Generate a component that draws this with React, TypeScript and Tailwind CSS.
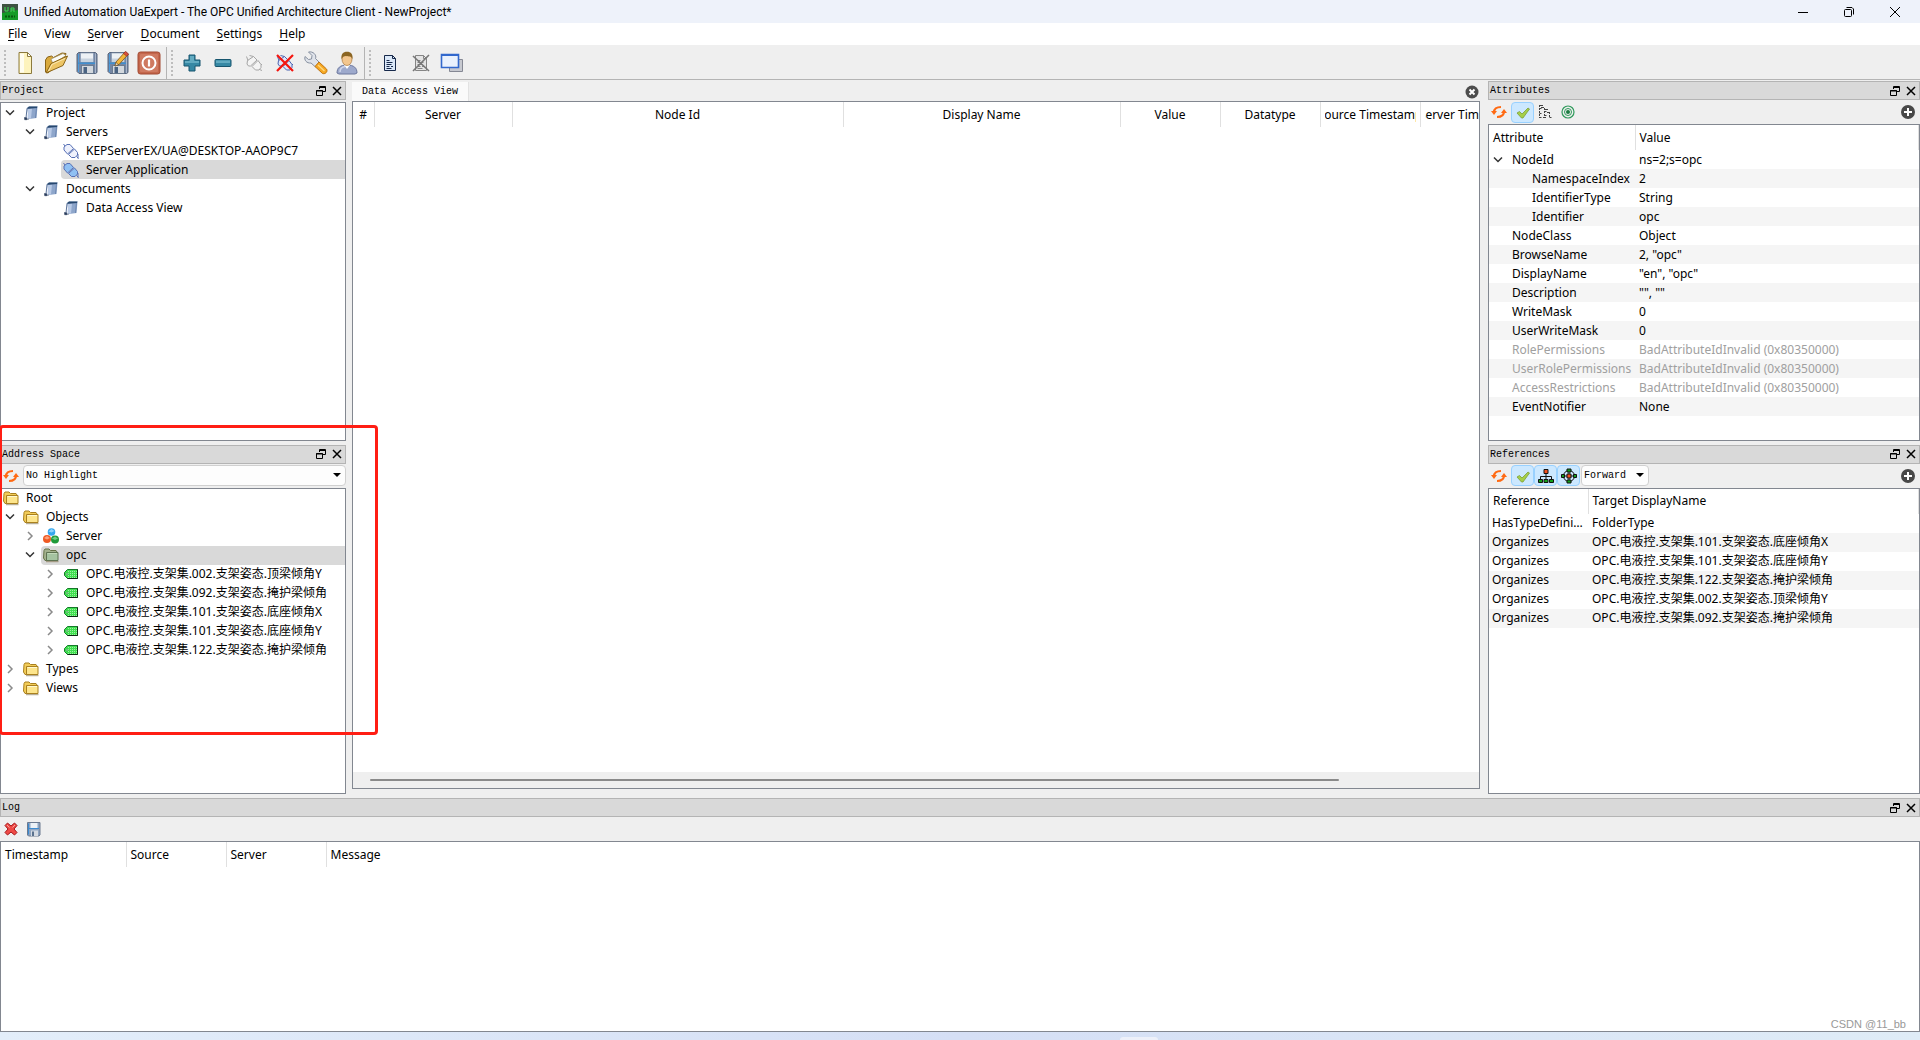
import React, { ReactNode } from "react";

type IconProps = { children: ReactNode; size?: "sm" | "md" };

function Icon({ children, size = "sm" }: IconProps) {
  return (
    <svg
      viewBox={size === "sm" ? "0 0 16 16" : "0 0 24 24"}
      className={size === "sm" ? "size-4 shrink-0" : "size-6 shrink-0"}
      fill="none"
      aria-hidden="true"
    >
      {children}
    </svg>
  );
}

/* ---------- toolbar icons ---------- */

const NewFileIcon = () => (
  <Icon size="md">
    <path d="M6 1.500h8.500l4 4V22.500H6z" fill="#fdf3bd" stroke="#8c7a3d" />
    <path d="M7 2.500h4v19H7z" fill="#fffdf0" />
    <path d="M14.500 1.500v4h4z" fill="#fff" stroke="#8c7a3d" />
  </Icon>
);

const OpenIcon = () => (
  <Icon size="md">
    <path d="M1.500 21V9l2-3 4-1 2 1.500L18 2l4 .5-1 4L4 22z" fill="#d9a93c" stroke="#8a6417" />
    <path d="M7 8 19 2.500l3 2L9 13z" fill="#fbfbf6" stroke="#9b8a5c" strokeWidth=".7" />
    <path d="m2 22 5-9.500L23.500 5 19 14.500z" fill="#edc566" stroke="#8a6417" />
    <path d="m4.500 20 3.500-6.500 13-6" stroke="#fae7b0" />
  </Icon>
);

const Floppy = () => (
  <>
    <path d="M3.500 1.500h17l1.500 1.500v18.500l-1.500 1H4l-2-2V3z" fill="#7486a3" stroke="#56647c" />
    <path d="M20.500 2.500v19.500" stroke="#a9b6ca" />
    <path d="M3.500 3v18" stroke="#4f9ad8" />
    <path d="M5.500 2h13v9h-13z" fill="#edf1f5" stroke="#8598b2" strokeWidth=".7" />
    <path d="M6 7.500h12v3H6z" fill="#c8d3df" />
    <path d="M3 11.500h17v1.500H3z" fill="#3f8fd0" />
    <path d="M6.500 14.500h12v8h-12z" fill="#d3d8de" stroke="#53657d" strokeWidth=".7" />
    <path d="M8.500 16h3.500v6H8.500z" fill="#4a6382" />
  </>
);

const SaveIcon = () => (
  <Icon size="md">
    <Floppy />
  </Icon>
);

const SaveAsIcon = () => (
  <Icon size="md">
    <Floppy />
    <path d="m9 15 1-4L19 1l3 2.500-9 10z" fill="#f3b53a" stroke="#7d5312" strokeWidth=".8" />
    <path d="m17.500 2.500 2-2.200 3.200 2.700-2 2.200z" fill="#d8503e" stroke="#83281c" strokeWidth=".6" />
    <path d="m9 15 1-3.500 2.500 2z" fill="#f7e3c0" stroke="#4d3c20" strokeWidth=".5" />
  </Icon>
);

const PowerIcon = () => (
  <Icon size="md">
    <rect x="1" y="1" width="22" height="22" rx="2.500" fill="#c4674c" stroke="#a34a33" />
    <rect x="3" y="3" width="18" height="18" rx="1" fill="#cf7a61" />
    <circle cx="12" cy="12" r="6.500" stroke="#fff" strokeWidth="2" />
    <path d="M12 8.500v7" stroke="#fff" strokeWidth="2.200" />
  </Icon>
);

const PlusIcon = () => (
  <Icon size="md">
    <path
      d="M9 4h6v5h5v6h-5v5H9v-5H4V9h5z"
      fill="#3688a4"
      stroke="#17556e"
      strokeLinejoin="round"
    />
    <path d="M10 5h4v5h5v2H5v-2h5z" fill="#63abc1" />
  </Icon>
);

const MinusIcon = () => (
  <Icon size="md">
    <rect x="4" y="8.500" width="16" height="7" rx="1" fill="#3688a4" stroke="#17556e" />
    <path d="M5 9.500h14V12H5z" fill="#63abc1" />
  </Icon>
);

const PlugMark = ({ stroke, fill }: { stroke: string; fill: string }) => (
  <>
    <path d="m5.500 9.500 6-4L15 9l-6.500 6h-2l-1.500-2z" fill={fill} stroke={stroke} />
    <path d="m10 15.500 6-6 3 4v3L17 19h-3.500z" fill={fill} stroke={stroke} />
    <path d="M6 9.500 4.500 5.500M11.500 5.500l-4-1M17.500 18.500l2.500 1M19 14l1-1" stroke={stroke} />
  </>
);

const ConnectIcon = () => (
  <Icon size="md">
    <PlugMark stroke="#a5a5a5" fill="#f4f4f4" />
  </Icon>
);

const DisconnectIcon = () => (
  <Icon size="md">
    <PlugMark stroke="#4a62b0" fill="#dfe6fa" />
    <path d="m4 4 16 16M20 4 4 20" stroke="#f5150f" strokeWidth="2.200" />
  </Icon>
);

const WrenchIcon = () => (
  <Icon size="md">
    <path
      d="M4.500 1 8 4.500 7.500 8l-3 .5L1 5.500C0 9 2.500 12.500 7 12l4.500 4 4-4.500-4-4C13 4 9 0 4.500 1z"
      fill="#dfe3ea"
      stroke="#8790a0"
    />
    <path
      d="m11 15.500 4-4.500 7.500 7c1.500 2-.5 5.500-4 4.500z"
      fill="#f6a821"
      stroke="#bf7412"
    />
    <path d="m14 14 6.500 6" stroke="#fdd67f" strokeWidth="1.500" />
  </Icon>
);

const UserIcon = () => (
  <Icon size="md">
    <path d="M2 22c0-5 3-8 10-8s10 3 10 8l-2 1H4z" fill="#9da9cc" stroke="#6d789e" />
    <path d="M5 21c0-3 2-5 5-5.500" stroke="#cfd6eb" strokeWidth="1.500" />
    <path d="m9 14 3 4 3-4z" fill="#fff" />
    <ellipse cx="12" cy="8" rx="5" ry="6.500" fill="#f3c68e" stroke="#a8743a" strokeWidth=".7" />
    <path d="M6.500 8C6 3 8 .8 12 .8S18 3 17.500 8C16 5 14 5.500 11 5 9 5 7.500 6 6.500 8z" fill="#8b6523" />
  </Icon>
);

const DocLines = ({ fill, stroke }: { fill: string; stroke: string }) => (
  <>
    <path d="M6.500 4.500h8l3 3v12h-11z" fill={fill} stroke={stroke} />
    <path d="M14.500 4.500v3h3" stroke={stroke} />
    <path d="M8.500 9.500h3M8.500 11.500h6M8.500 13.500h5M8.500 15.500h3M13 15.500h2M8.500 17.500h5" stroke={stroke} />
  </>
);

const DocumentIcon = () => (
  <Icon size="md">
    <DocLines fill="#dbe8f8" stroke="#17294a" />
  </Icon>
);

const RemoveDocumentIcon = () => (
  <Icon size="md">
    <DocLines fill="#e4e4e4" stroke="#858585" />
    <path d="m4 5 16 15M20 4 4 20" stroke="#777" strokeWidth="1.600" />
  </Icon>
);

const WindowsIcon = () => (
  <Icon size="md">
    <path d="M9.500 8.500h13v12h-13z" fill="#c7c9d0" stroke="#858894" />
    <path d="M1.500 3.500h17v13h-17z" fill="#e9f1fd" stroke="#3268cd" strokeWidth="1.600" />
    <path d="M2 4h16" stroke="#3268cd" strokeWidth="2" />
  </Icon>
);

/* ---------- 16px icons ---------- */

const BookIcon = () => (
  <Icon>
    <path d="m4 3 2-1.500h8.500L13.500 13 6 14z" fill="#8ea6cb" />
    <path d="m5 4 4-.5L8 13.500l-3.500.5z" fill="#b9cae6" />
    <path d="M13.500 2.500 12.500 13" stroke="#6c86b0" />
    <path d="m3.500 3.500 2.500-2h8.500l-.5 1.500-8.500.8z" fill="#27486f" />
    <path d="M4 3.500 3 13" stroke="#5a7299" />
    <path d="M1.500 12.500 4 13l-.5 1.700H1.700zM3 14.700l3-.7" fill="#2a3d5c" stroke="#2a3d5c" strokeWidth=".6" />
  </Icon>
);

const ServerPlug = ({ fill }: { fill: string }) => (
  <Icon>
    <path d="m1 4 3-2.500h3l3.500 4L4.500 11 1 7z" fill={fill} stroke="#5770b5" />
    <path d="m5.500 11.500 6-5.500 3 3.500v2.500L12 14.500H8.500z" fill={fill} stroke="#5770b5" />
    <path d="m2 3-1.500-2M13.500 13.500l2 2M15 11v4.500" stroke="#5770b5" />
  </Icon>
);

const FolderIcon = ({ green = false }: { green?: boolean }) => (
  <Icon>
    <path
      d="M1 3.500 2 2h4l1.500 1.500H13l1 1.500v8.500H2L.5 11z"
      fill={green ? "#a3b18d" : "#f2cc58"}
      stroke={green ? "#667247" : "#a9801f"}
    />
    <path
      d="M3.500 5.500h11.500v8H3.500z"
      fill={green ? "#a5c3a0" : "#fde58c"}
      stroke={green ? "#5f7352" : "#a9801f"}
    />
    <path d="M4.500 6.500H14" stroke={green ? "#c2d8b8" : "#fff8cf"} />
    <path d="M3 14.700h12.500" stroke="#6b5a2c" strokeOpacity=".6" />
  </Icon>
);

const CubesIcon = () => (
  <Icon>
    <circle cx="8.500" cy="4" r="3.800" fill="#35a7ee" />
    <path d="M5.500 3.500 8.500 1l3 2-3 1.500z" fill="#8fd3fb" />
    <circle cx="4" cy="11" r="4" fill="#ef5a24" />
    <path d="M1 10l3-2 3 2-3 1.500z" fill="#fba27c" />
    <circle cx="12" cy="11.500" r="4" fill="#1f9a3a" />
    <path d="M9 10.500 12 8.500l3 2-3 1.500z" fill="#6fd083" />
  </Icon>
);

const TagIcon = () => (
  <Icon>
    <path d="M4.500 3.500h10v9h-10l-3-3v-3z" fill="#3fe04f" stroke="#157a2a" />
    <path d="M14.500 3.500v9h-10" stroke="#0c2b12" />
    <path
      d="M5 5.500h9M5 7.500h9M5 9.500h9M5 11.500h9"
      stroke="#9df0a2"
      strokeDasharray="1 1"
    />
    <circle cx="4" cy="8" r="1" fill="#d8f7da" stroke="#157a2a" strokeWidth=".5" />
  </Icon>
);

const RefreshIcon = () => (
  <Icon>
    <path d="M3 8.500C3 5 5.500 3 10 3" stroke="#ff6a13" strokeWidth="2.200" />
    <path d="M0 7h6L3 11z" fill="#ff6a13" />
    <path d="M13 7.500c0 3.500-2.500 5.500-7 5.500" stroke="#ff6a13" strokeWidth="2.200" />
    <path d="M16 9h-6l3-4z" fill="#ff6a13" />
  </Icon>
);

const CheckIcon = () => (
  <Icon>
    <path d="m2 9 2.500-1.500L7 10l6-6 1.500 1L8 14H6.500z" fill="#a5cf4a" stroke="#7c9e38" strokeWidth=".8" />
  </Icon>
);

const HierarchyIcon = () => (
  <Icon>
    <path
      d="M2.500 1v13M2.500 4.500H5M2.500 9.500H5M2.500 13.500H5M7.500 4v9M7.500 7.500H10M7.500 11.500H10M12.500 8v6M12.500 13.500H15"
      stroke="#444"
      strokeDasharray="2 1"
    />
    <path d="M3 1.500h3M4 3.500h3M8 5.500h3M10 8.500h3M6 13.500h3" stroke="#444" />
  </Icon>
);

const TargetIcon = () => (
  <Icon>
    <circle cx="8" cy="8" r="6" stroke="#2f9a5b" strokeWidth="1.200" />
    <circle cx="8" cy="8" r="3.500" stroke="#2f9a5b" />
    <circle cx="8" cy="8" r="2" fill="#1b7d42" />
  </Icon>
);

const CirclePlusIcon = () => (
  <Icon>
    <circle cx="8" cy="8" r="7" fill="#484848" />
    <path d="M8 4v8M4 8h8" stroke="#fff" strokeWidth="2" />
  </Icon>
);

const CircleCloseIcon = () => (
  <Icon>
    <circle cx="8" cy="8" r="6.500" fill="#4d4d4d" />
    <path d="m5.500 5.500 5 5M10.500 5.500l-5 5" stroke="#fff" strokeWidth="2" />
  </Icon>
);

const OrgChartIcon = () => (
  <Icon>
    <path d="M8 5v7M2.500 12V8.500h11V12" stroke="#111" />
    <path d="M6 1.500h4v4H6z" fill="#f4511e" stroke="#111" />
    <path d="M.5 11.500h4v3h-4zM6 11.500h4v3H6zM11.500 11.500h4v3h-4z" fill="#12a01a" stroke="#111" />
  </Icon>
);

const NeighborsIcon = () => (
  <Icon>
    <circle cx="8" cy="8" r="5.500" stroke="#111" />
    <path d="M8 3v10M3 8h10" stroke="#111" />
    <path d="M6 1h4v3H6zM6 12h4v3H6zM.5 6.500h3v3h-3zM12.500 6.500h3v3h-3z" fill="#12a01a" stroke="#111" />
    <path d="M6 6h4v4H6z" fill="#f4511e" stroke="#111" />
  </Icon>
);

const ClearIcon = () => (
  <Icon>
    <path
      d="m2 4.500 2.500-2.500L8 5l3.500-3L14 4.500 11 8l3 3.500-2.500 2.500L8 11l-3.500 3L2 11.500 5 8z"
      fill="#ef4a46"
      stroke="#a5161a"
    />
    <path d="m4 4 2.500 2.500M12 4 9.500 6.500" stroke="#fba09c" />
  </Icon>
);

const SmallSaveIcon = () => (
  <Icon>
    <path d="M1.500 1.500H14v12.500l-1 1H2.500l-1-1z" fill="#8fa5c2" stroke="#6c7a90" />
    <path d="M4.500 2h7v5h-7z" fill="#edf2f7" />
    <path d="M3 7.500h10M2.500 2.500v11" stroke="#3c8bd0" />
    <path d="M5 9.500h7V15H5z" fill="#d4dae2" />
    <path d="M6 10.500h2V15H6z" fill="#5a718d" />
  </Icon>
);

const AppIcon = () => (
  <Icon>
    <path d="M0 0h16v16H0z" fill="#159a28" />
    <path d="M0 0h16v6L0 9z" fill="#3d5242" />
    <path d="M3 3v4h3V3M9 8V4h3v4M9 6h3" stroke="#3be052" />
    <path d="M3 12.500h10" stroke="#07570f" strokeWidth="2" strokeDasharray="2 1" />
  </Icon>
);

/* ---------- shared parts ---------- */

function ToolButton({
  label,
  children,
  active = false,
}: {
  label: string;
  children: ReactNode;
  active?: boolean;
}) {
  return (
    <button
      type="button"
      aria-label={label}
      title={label}
      className={
        active
          ? "flex h-[21px] w-[23px] items-center justify-center rounded-sm border border-[#99d1ff] bg-[#cce8ff]"
          : "flex h-[21px] w-[23px] items-center justify-center pr-px"
      }
    >
      {children}
    </button>
  );
}

function BarButton({ label, children }: { label: string; children: ReactNode }) {
  return (
    <button
      type="button"
      aria-label={label}
      title={label}
      className="flex w-[31px] items-center justify-center"
    >
      {children}
    </button>
  );
}

const Grip = () => (
  <span className="mr-[3px] ml-1 h-[26px] border-l-2 border-dotted border-[#bdbdbd]" aria-hidden="true" />
);

function DockTitle({ title }: { title: string }) {
  return (
    <header className="flex h-[19px] shrink-0 items-center border border-[#b4b4b4] bg-[#d9d9d9] pl-px">
      <h2 className="flex-1 pt-px font-['Liberation_Mono',monospace] text-[10px]">{title}</h2>
      <button type="button" aria-label={`Float ${title}`} className="flex w-4 justify-center">
        <svg viewBox="0 0 10 10" className="size-[10px]" fill="none" stroke="#000">
          <path d="M3.500 3V.5h6v5H7M3 1.500h7" />
          <path d="M.5 4.500h6v5h-6zM0 5h7" />
        </svg>
      </button>
      <button type="button" aria-label={`Close ${title}`} className="flex w-4 justify-center">
        <svg viewBox="0 0 10 10" className="size-[10px]" fill="none" stroke="#000">
          <path d="m1 1 8 8M9 1 1 9" strokeWidth="1.500" />
        </svg>
      </button>
    </header>
  );
}

function Chevron({ open, label }: { open: boolean; label: string }) {
  return (
    <button
      type="button"
      aria-label={`${open ? "Collapse" : "Expand"} ${label}`}
      aria-expanded={open}
      className="flex w-5 shrink-0 items-center justify-center pr-0.5"
    >
      <svg viewBox="0 0 10 10" className="size-[10px]" fill="none">
        {open ? (
          <path d="m1 2.500 4 4 4-4" stroke="#333" strokeWidth="1.500" />
        ) : (
          <path d="m3 1 4 4-4 4" stroke="#8a8a8a" strokeWidth="1.500" />
        )}
      </svg>
    </button>
  );
}

type Node = {
  label: string;
  level: 0 | 1 | 2 | 3;
  icon: ReactNode;
  open?: boolean;
  selected?: boolean;
};

const indent = ["pl-0", "pl-0", "pl-5", "pl-10"];

function Tree({ label, nodes }: { label: string; nodes: Node[] }) {
  return (
    <ul
      role="tree"
      aria-label={label}
      className="min-h-0 flex-1 overflow-hidden border border-[#828790] bg-white"
    >
      {nodes.map((n) => (
        <li
          key={n.label}
          role="treeitem"
          aria-level={n.level + 1}
          aria-selected={!!n.selected}
          className={`flex h-[19px] ${indent[n.level]}`}
        >
          {n.level > 0 &&
            (n.open === undefined ? (
              <span className="w-5 shrink-0" />
            ) : (
              <Chevron open={n.open} label={n.label} />
            ))}
          <span
            className={
              n.selected
                ? "flex flex-1 items-center gap-[7px] rounded-l-sm bg-[#d9d9d9] pl-0.5 whitespace-nowrap"
                : "flex flex-1 items-center gap-[7px] pl-0.5 whitespace-nowrap"
            }
          >
            {n.icon}
            {n.label}
          </span>
        </li>
      ))}
    </ul>
  );
}

/* ---------- data ---------- */

const projectNodes: Node[] = [
  { label: "Project", level: 1, icon: <BookIcon />, open: true },
  { label: "Servers", level: 2, icon: <BookIcon />, open: true },
  { label: "KEPServerEX/UA@DESKTOP-AAOP9C7", level: 3, icon: <ServerPlug fill="#eef1fc" /> },
  { label: "Server Application", level: 3, icon: <ServerPlug fill="#8fc0f3" />, selected: true },
  { label: "Documents", level: 2, icon: <BookIcon />, open: true },
  { label: "Data Access View", level: 3, icon: <BookIcon /> },
];

const addressNodes: Node[] = [
  { label: "Root", level: 0, icon: <FolderIcon /> },
  { label: "Objects", level: 1, icon: <FolderIcon />, open: true },
  { label: "Server", level: 2, icon: <CubesIcon />, open: false },
  { label: "opc", level: 2, icon: <FolderIcon green />, open: true, selected: true },
  { label: "OPC.电液控.支架集.002.支架姿态.顶梁倾角Y", level: 3, icon: <TagIcon />, open: false },
  { label: "OPC.电液控.支架集.092.支架姿态.掩护梁倾角", level: 3, icon: <TagIcon />, open: false },
  { label: "OPC.电液控.支架集.101.支架姿态.底座倾角X", level: 3, icon: <TagIcon />, open: false },
  { label: "OPC.电液控.支架集.101.支架姿态.底座倾角Y", level: 3, icon: <TagIcon />, open: false },
  { label: "OPC.电液控.支架集.122.支架姿态.掩护梁倾角", level: 3, icon: <TagIcon />, open: false },
  { label: "Types", level: 1, icon: <FolderIcon />, open: false },
  { label: "Views", level: 1, icon: <FolderIcon />, open: false },
];

type Attribute = { name: string; value: string; child?: boolean; open?: boolean; muted?: boolean };

const attributes: Attribute[] = [
  { name: "NodeId", value: "ns=2;s=opc", open: true },
  { name: "NamespaceIndex", value: "2", child: true },
  { name: "IdentifierType", value: "String", child: true },
  { name: "Identifier", value: "opc", child: true },
  { name: "NodeClass", value: "Object" },
  { name: "BrowseName", value: '2, "opc"' },
  { name: "DisplayName", value: '"en", "opc"' },
  { name: "Description", value: '"", ""' },
  { name: "WriteMask", value: "0" },
  { name: "UserWriteMask", value: "0" },
  { name: "RolePermissions", value: "BadAttributeIdInvalid (0x80350000)", muted: true },
  { name: "UserRolePermissions", value: "BadAttributeIdInvalid (0x80350000)", muted: true },
  { name: "AccessRestrictions", value: "BadAttributeIdInvalid (0x80350000)", muted: true },
  { name: "EventNotifier", value: "None" },
];

const references = [
  ["HasTypeDefinition", "FolderType"],
  ["Organizes", "OPC.电液控.支架集.101.支架姿态.底座倾角X"],
  ["Organizes", "OPC.电液控.支架集.101.支架姿态.底座倾角Y"],
  ["Organizes", "OPC.电液控.支架集.122.支架姿态.掩护梁倾角"],
  ["Organizes", "OPC.电液控.支架集.002.支架姿态.顶梁倾角Y"],
  ["Organizes", "OPC.电液控.支架集.092.支架姿态.掩护梁倾角"],
];

const menus = [
  ["F", "ile"],
  ["", "View"],
  ["S", "erver"],
  ["D", "ocument"],
  ["S", "ettings"],
  ["H", "elp"],
];

const dataColumns = [
  { label: "#", width: "w-[21px]" },
  { label: "Server", width: "w-[138px]" },
  { label: "Node Id", width: "w-[331px]" },
  { label: "Display Name", width: "w-[277px]" },
  { label: "Value", width: "w-[100px]" },
  { label: "Datatype", width: "w-[100px]" },
  { label: "Source Timestamp", width: "w-[100px]" },
  { label: "Server Timestamp", width: "w-[100px]" },
];

const headCell = "h-[25px] border-r border-[#e0e0e0] px-1 text-left font-normal";

/* ---------- sections ---------- */

function TitleBar() {
  return (
    <div className="flex h-[23px] shrink-0 items-center bg-[#eef2fa] pl-0.5">
      <AppIcon />
      <h1 className="ml-[6px] flex-1 font-['Roboto',sans-serif] text-[12px]">
        Unified Automation UaExpert - The OPC Unified Architecture Client - NewProject*
      </h1>
      <button type="button" aria-label="Minimize" className="flex w-[46px] justify-center">
        <svg viewBox="0 0 12 12" className="size-3" stroke="#000">
          <path d="M1 6.500h10" />
        </svg>
      </button>
      <button type="button" aria-label="Restore" className="flex w-[46px] justify-center">
        <svg viewBox="0 0 12 12" className="size-3" fill="none" stroke="#000">
          <rect x="1.500" y="3.500" width="7" height="7" rx="1" />
          <path d="M3.500 1.500H9l1.500 1.500v5.500" />
        </svg>
      </button>
      <button type="button" aria-label="Close window" className="mr-0.5 flex w-[46px] justify-center">
        <svg viewBox="0 0 12 12" className="size-3" stroke="#000">
          <path d="m1 1 10 10M11 1 1 11" />
        </svg>
      </button>
    </div>
  );
}

function MenuBar() {
  return (
    <nav className="flex h-[23px] shrink-0 items-center gap-[17px] border-b border-[#efefef] bg-white pl-2">
      {menus.map(([key, rest]) => (
        <button key={key + rest} type="button">
          {key && <span className="underline underline-offset-2">{key}</span>}
          {rest}
        </button>
      ))}
    </nav>
  );
}

function ToolBar() {
  return (
    <div className="flex h-[34px] shrink-0 items-stretch border-b border-[#b4b4b4] pt-px">
      <div className="flex items-center border-r border-[#b4b4b4] pr-0.5">
        <Grip />
        <BarButton label="New"><NewFileIcon /></BarButton>
        <BarButton label="Open"><OpenIcon /></BarButton>
        <BarButton label="Save"><SaveIcon /></BarButton>
        <BarButton label="Save as"><SaveAsIcon /></BarButton>
        <BarButton label="Exit"><PowerIcon /></BarButton>
      </div>
      <div className="flex items-center border-r border-[#b4b4b4] pr-0.5">
        <Grip />
        <BarButton label="Add server"><PlusIcon /></BarButton>
        <BarButton label="Remove server"><MinusIcon /></BarButton>
        <BarButton label="Connect"><ConnectIcon /></BarButton>
        <BarButton label="Disconnect"><DisconnectIcon /></BarButton>
        <BarButton label="Properties"><WrenchIcon /></BarButton>
        <BarButton label="Change user"><UserIcon /></BarButton>
      </div>
      <div className="flex items-center">
        <Grip />
        <BarButton label="Add document"><DocumentIcon /></BarButton>
        <BarButton label="Remove document"><RemoveDocumentIcon /></BarButton>
        <BarButton label="Windows"><WindowsIcon /></BarButton>
      </div>
    </div>
  );
}

function Caret() {
  return (
    <span
      aria-hidden="true"
      className="pointer-events-none absolute top-2 right-[5px] border-x-4 border-t-4 border-x-transparent border-t-black"
    />
  );
}

const selectStyle =
  "block h-[21px] w-full appearance-none rounded-sm border border-[#d0d0d0] bg-[#fdfdfd] pt-px pl-[2px] font-['Liberation_Mono',monospace] text-[10px]";

function AddressSpace() {
  return (
    <section className="relative flex min-h-0 flex-[350] flex-col">
      <DockTitle title="Address Space" />
      <div className="flex h-6 shrink-0 items-center">
        <ToolButton label="Refresh address space"><RefreshIcon /></ToolButton>
        <label className="relative flex-1">
          <span className="sr-only">Highlight</span>
          <select className={selectStyle}>
            <option>No Highlight</option>
          </select>
          <Caret />
        </label>
      </div>
      <Tree label="Address Space" nodes={addressNodes} />
      <div className="pointer-events-none absolute -top-5 -left-px z-10 h-[310px] w-[379px] rounded-sm border-[3px] border-[#ff1e14]" />
    </section>
  );
}

function DataAccessView() {
  return (
    <main className="flex min-w-0 flex-1 flex-col pt-px">
      <div className="flex h-[19px] shrink-0 items-center justify-between">
        <button
          type="button"
          className="h-full w-[117px] border-r border-[#e2e2e2] bg-[#fafafa] font-['Liberation_Mono',monospace] text-[10px]"
        >
          Data Access View
        </button>
        <button type="button" aria-label="Close document"><CircleCloseIcon /></button>
      </div>
      <div className="mb-[5px] flex min-h-0 flex-1 flex-col overflow-hidden border border-[#828790] bg-white">
        <div className="min-h-0 flex-1 overflow-hidden">
          <table className="w-[1167px] table-fixed border-collapse">
            <thead>
              <tr>
                {dataColumns.map((c) => (
                  <th
                    key={c.label}
                    className={`h-[25px] border-r border-[#e0e0e0] px-1 font-normal ${c.width}`}
                  >
                    <div className="flex justify-center overflow-hidden whitespace-nowrap">{c.label}</div>
                  </th>
                ))}
              </tr>
            </thead>
          </table>
        </div>
        <div className="flex h-4 shrink-0 items-center bg-[#efefef] pr-[140px] pl-[17px]">
          <div className="h-0.5 flex-1 rounded-full bg-[#8a8a8a]" />
        </div>
      </div>
    </main>
  );
}

function AttributesPanel() {
  return (
    <section className="flex min-h-0 flex-[360] flex-col">
      <DockTitle title="Attributes" />
      <div className="flex h-6 shrink-0 items-center">
        <ToolButton label="Refresh attributes"><RefreshIcon /></ToolButton>
        <ToolButton label="Auto update attributes" active><CheckIcon /></ToolButton>
        <ToolButton label="Expand attributes"><HierarchyIcon /></ToolButton>
        <ToolButton label="Track node"><TargetIcon /></ToolButton>
        <span className="flex-1" />
        <ToolButton label="Add attribute"><CirclePlusIcon /></ToolButton>
      </div>
      <div className="min-h-0 flex-1 overflow-hidden border border-[#828790] bg-white">
        <table className="w-full table-fixed border-collapse">
          <thead>
            <tr>
              <th className={`${headCell} w-[146px]`}>Attribute</th>
              <th className={headCell}>Value</th>
            </tr>
          </thead>
          <tbody>
            {attributes.map((a) => (
              <tr key={a.name} className={a.muted ? "h-[19px] text-[#a0a0a0] even:bg-[#f5f5f5]" : "h-[19px] even:bg-[#f5f5f5]"}>
                <td className="p-0 whitespace-nowrap">
                  <div className={a.child ? "flex pl-[43px]" : a.open ? "flex gap-[3px]" : "flex pl-[23px]"}>
                    {a.open && <Chevron open label={a.name} />}
                    {a.name}
                  </div>
                </td>
                <td className="py-0 pl-1">{a.value}</td>
              </tr>
            ))}
          </tbody>
        </table>
      </div>
    </section>
  );
}

function ReferencesPanel() {
  return (
    <section className="flex min-h-0 flex-[350] flex-col">
      <DockTitle title="References" />
      <div className="flex h-6 shrink-0 items-center">
        <ToolButton label="Refresh references"><RefreshIcon /></ToolButton>
        <ToolButton label="Auto update references" active><CheckIcon /></ToolButton>
        <ToolButton label="Hierarchical references" active><OrgChartIcon /></ToolButton>
        <ToolButton label="Non-hierarchical references" active><NeighborsIcon /></ToolButton>
        <label className="relative ml-px w-[68px]">
          <span className="sr-only">Direction</span>
          <select className={selectStyle}>
            <option>Forward</option>
          </select>
          <Caret />
        </label>
        <span className="flex-1" />
        <ToolButton label="Add reference"><CirclePlusIcon /></ToolButton>
      </div>
      <div className="min-h-0 flex-1 overflow-hidden border border-[#828790] bg-white">
        <table className="w-full table-fixed border-collapse">
          <thead>
            <tr>
              <th className={`${headCell} w-[99px]`}>Reference</th>
              <th className={headCell}>Target DisplayName</th>
            </tr>
          </thead>
          <tbody>
            {references.map(([ref, target]) => (
              <tr key={target} className="h-[19px] even:bg-[#f5f5f5]">
                <td className="truncate py-0 pr-1 pl-[3px]">{ref}</td>
                <td className="py-0 pl-1 whitespace-nowrap">{target}</td>
              </tr>
            ))}
          </tbody>
        </table>
      </div>
    </section>
  );
}

function LogPanel() {
  return (
    <section className="relative flex h-[234px] shrink-0 flex-col">
      <DockTitle title="Log" />
      <div className="flex h-6 shrink-0 items-center">
        <ToolButton label="Clear log"><ClearIcon /></ToolButton>
        <ToolButton label="Save log"><SmallSaveIcon /></ToolButton>
      </div>
      <div className="min-h-0 flex-1 border border-[#828790] bg-white">
        <table className="w-full table-fixed border-collapse">
          <thead>
            <tr>
              <th className={`${headCell} w-[125px]`}>Timestamp</th>
              <th className={`${headCell} w-[100px]`}>Source</th>
              <th className={`${headCell} w-[100px]`}>Server</th>
              <th className="h-[25px] px-1 text-left font-normal">Message</th>
            </tr>
          </thead>
        </table>
      </div>
      <p className="absolute right-[14px] bottom-px font-['Liberation_Sans',sans-serif] text-[11px] leading-[14px] text-[#999]">
        CSDN @11_bb
      </p>
    </section>
  );
}

export default function App() {
  return (
    <div className="flex h-screen flex-col overflow-hidden bg-[#efefef] font-['Noto_Sans','Noto_Sans_CJK_SC',sans-serif] text-[12px] leading-[18px] text-black">
      <TitleBar />
      <MenuBar />
      <ToolBar />
      <div className="flex min-h-0 flex-1 pt-px pb-1">
        <aside className="mr-[6px] flex w-[346px] shrink-0 flex-col gap-1">
          <section className="flex min-h-0 flex-[360] flex-col">
            <DockTitle title="Project" />
            <div className="h-0.5 shrink-0" />
            <Tree label="Project" nodes={projectNodes} />
          </section>
          <AddressSpace />
        </aside>
        <DataAccessView />
        <aside className="ml-2 flex w-[432px] shrink-0 flex-col gap-1">
          <AttributesPanel />
          <ReferencesPanel />
        </aside>
      </div>
      <LogPanel />
      <div className="flex h-2 shrink-0 items-end bg-linear-to-r from-[#e3eefa] via-[#d5dff5] to-[#dfecf7] pl-[1120px]">
        <span className="h-[3px] w-[38px] rounded-t-sm bg-[#edf0f9]" />
      </div>
    </div>
  );
}
